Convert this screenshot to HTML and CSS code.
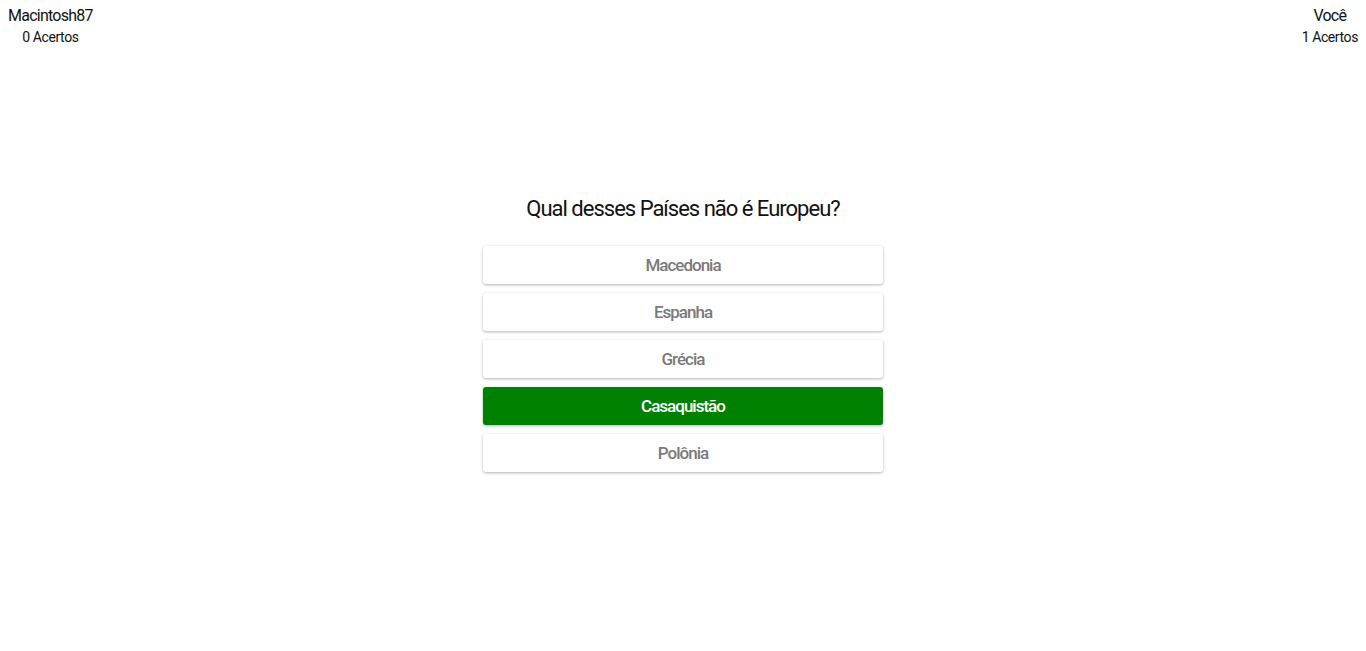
FILE: index.html
```html
<!DOCTYPE html>
<html lang="pt">
<head>
<meta charset="utf-8">
<title>Quiz</title>
<link rel="stylesheet" href="styles.css">
</head>
<body>
<header class="scoreboard">
  <div class="player">
    <div class="player-name">Macintosh87</div>
    <div class="player-score">0 Acertos</div>
  </div>
  <div class="player">
    <div class="player-name">Você</div>
    <div class="player-score">1 Acertos</div>
  </div>
</header>
<main class="quiz">
  <h1 class="question">Qual desses Países não é Europeu?</h1>
  <div class="options">
    <button class="option">Macedonia</button>
    <button class="option">Espanha</button>
    <button class="option">Grécia</button>
    <button class="option option-correct">Casaquistão</button>
    <button class="option">Polônia</button>
  </div>
</main>
</body>
</html>
```
FILE: styles.css
```css
* { box-sizing: border-box; }
html, body { margin: 0; padding: 0; background: #fff; }
body {
  font-family: Roboto, "DejaVu Sans Condensed", "Liberation Sans", sans-serif;
  color: #111;
}
.scoreboard {
  display: flex;
  justify-content: space-between;
  padding: 6px 8px 0 8px;
}
.player { text-align: center; }
.player-name { font-size: 16px; line-height: 20px; letter-spacing: -0.75px; }
.player-score { font-size: 14px; line-height: 22px; letter-spacing: -0.4px; }
.quiz {
  display: flex;
  flex-direction: column;
  align-items: center;
  padding-top: 147px;
  padding-bottom: 10px;
}
.question {
  margin: 0 0 23px 0;
  font-size: 22px;
  font-weight: normal;
  line-height: 28px;
  letter-spacing: -1px;
}
.options {
  display: flex;
  flex-direction: column;
  gap: 9px;
  width: 400px;
}
.option {
  height: 38px;
  border: none;
  border-radius: 3px;
  background: #fff;
  box-shadow: 0 1px 3px rgba(0,0,0,0.3);
  font-family: inherit;
  font-size: 17px;
  font-weight: 500;
  letter-spacing: -1px;
  color: #7a7a7a;
  cursor: pointer;
}
.option-correct {
  background: #008000;
  color: #fff;
}
```
